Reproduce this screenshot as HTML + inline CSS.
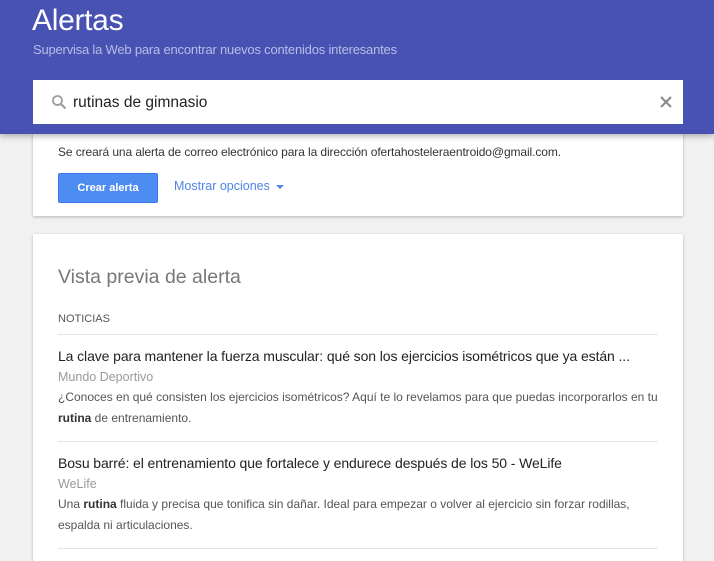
<!DOCTYPE html>
<html><head><meta charset="utf-8"><style>
*{margin:0;padding:0;box-sizing:border-box}
html{width:714px;height:561px;overflow:hidden}
body{width:714px;height:561px;overflow:hidden;background:#f1f1f1;font-family:"Liberation Sans",Arial,sans-serif;position:relative}
.hdr{position:absolute;left:0;top:0;width:714px;height:134px;background:#4852b3;box-shadow:0 2px 6px rgba(0,0,0,.3);z-index:2}
.t{position:absolute;left:32px;top:4px;font-size:30px;color:#fff;letter-spacing:-0.3px}
.st{position:absolute;left:33px;top:42px;font-size:13px;color:#b9bde6;letter-spacing:-0.2px}
.sb{position:absolute;left:33px;top:80px;width:650px;height:44px;background:#fff;z-index:3}
.sb .q{position:absolute;left:40px;top:14px;font-size:15.5px;color:#222}
.sb svg{position:absolute}
.card{position:absolute;left:33px;width:650px;background:#fff;box-shadow:0 1px 3px rgba(0,0,0,.25)}
.c1{top:120px;height:96px;z-index:1}
.c1 .m{position:absolute;left:25px;top:25px;font-size:12px;color:#333;letter-spacing:-0.1px}
.btn{position:absolute;left:25px;top:53px;width:100px;height:30px;background:#4d8cf0;border:1px solid #3b78e7;color:#fff;font-size:11px;font-weight:bold;text-align:center;line-height:28px;border-radius:2px}
.opt{position:absolute;left:141px;top:59px;font-size:12.5px;color:#4d84e8}
.opt span{display:inline-block;width:0;height:0;border-left:4px solid transparent;border-right:4px solid transparent;border-top:4px solid #4d84e8;margin-left:6px;vertical-align:middle}
.c2{top:234px;height:340px}
.c2 .h{position:absolute;left:25px;top:32px;font-size:19.5px;color:#777}
.c2 .n{position:absolute;left:25px;top:79px;font-size:11px;color:#555}
.hr{position:absolute;left:25px;width:600px;height:1px;background:#e2e2e2}
.it{position:absolute;left:25px;width:600px}
.it .a{font-size:14px;color:#222;letter-spacing:-0.1px;line-height:18px}
.it .s{font-size:12.5px;color:#999;margin-top:4px;line-height:16px}
.it .p{font-size:12px;color:#555;line-height:20.5px;margin-top:2px;letter-spacing:0}
.it b{color:#333}
</style></head><body>
<div class="hdr"><div class="t">Alertas</div><div class="st">Supervisa la Web para encontrar nuevos contenidos interesantes</div></div>
<div class="sb">
<svg style="left:18px;top:14px" width="16" height="16" viewBox="0 0 16 16"><circle cx="6.5" cy="6.5" r="4.5" fill="none" stroke="#9e9e9e" stroke-width="1.8"/><path d="M10 10l4.5 4.5" stroke="#9e9e9e" stroke-width="2.2"/></svg>
<div class="q">rutinas de gimnasio</div>
<svg style="left:627px;top:16px" width="12" height="12" viewBox="0 0 12 12"><path d="M1 1l10 10M11 1L1 11" stroke="#888" stroke-width="2"/></svg>
</div>
<div class="card c1"><div class="m">Se creará una alerta de correo electrónico para la dirección ofertahosteleraentroido@gmail.com.</div>
<div class="btn">Crear alerta</div><div class="opt">Mostrar opciones<span></span></div></div>
<div class="card c2">
<div class="h">Vista previa de alerta</div>
<div class="n">NOTICIAS</div>
<div class="hr" style="top:100px"></div>
<div class="it" style="top:113px"><div class="a">La clave para mantener la fuerza muscular: qué son los ejercicios isométricos que ya están ...</div><div class="s">Mundo Deportivo</div><div class="p">¿Conoces en qué consisten los ejercicios isométricos? Aquí te lo revelamos para que puedas incorporarlos en tu <b>rutina</b> de entrenamiento.</div></div>
<div class="hr" style="top:207px"></div>
<div class="it" style="top:220px"><div class="a">Bosu barré: el entrenamiento que fortalece y endurece después de los 50 - WeLife</div><div class="s">WeLife</div><div class="p">Una <b>rutina</b> fluida y precisa que tonifica sin dañar. Ideal para empezar o volver al ejercicio sin forzar rodillas,<br>espalda ni articulaciones.</div></div>
<div class="hr" style="top:314px"></div>
</div>
</body></html>
